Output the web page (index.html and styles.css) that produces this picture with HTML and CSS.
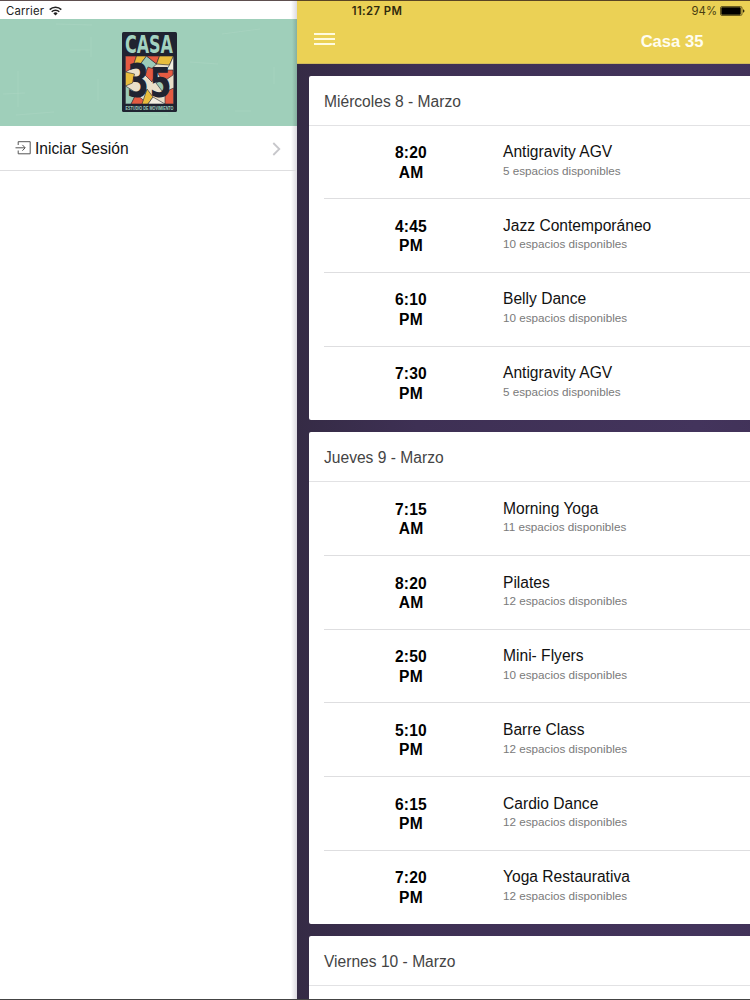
FILE: index.html
```
<!DOCTYPE html>
<html lang="es">
    <head>
        <meta charset="utf-8">
        <title>Casa 35</title>
        <meta name="viewport" content="width=device-width, initial-scale=1.0">
        <link rel="stylesheet" href="styles.css">
    </head>
    <body>
        <div class="statusbar">
            <div class="carrier">
                Carrier
                <svg width="13" height="10" viewBox="0 0 13 10" fill="none" stroke="#222" stroke-width="1.5">
                    <path d="M.7 3.6a8.2 8.2 0 0 1 11.6 0M2.7 5.8a5.4 5.4 0 0 1 7.6 0"/>
                    <path d="M6.5 9.6L4.4 7.4a3 3 0 0 1 4.2 0z" fill="#222" stroke="none"/>
                </svg>
            </div>
            <div class="clock">11:27 PM</div>
            <div class="battery">
                94%
                <svg width="25" height="10" viewBox="0 0 25 10">
                    <rect x=".5" y=".5" width="21.5" height="9" rx="1.5" fill="none" stroke="#6b5d22"/>
                    <rect x="1.3" y="1.3" width="19.4" height="7.4" rx=".8" fill="#000"/>
                    <path d="M23 3.2q1.5.5 1.5 1.8t-1.5 1.8z" fill="#30290c"/>
                </svg>
            </div>
        </div>
        <div class="app">
            <div class="menu">
                <div class="menu-header">
                    <svg class="scratches" width="297" height="107" viewBox="0 0 297 107" fill="none" stroke="#b5dccb" stroke-width="1">
                        <path d="M18 52v36M16 96l38-3M56 5l36 1M91 18v20M70 31h20M274 48v17M222 15l38-5M235 92h16M190 43l28 2M128 95l40 1M3 75l22-1M98 60v22" opacity=".3"/>
                    </svg>
                    <!-- logo -->
                    <svg class="logo" width="55" height="80" viewBox="0 0 55 80">
                        <rect width="55" height="80" rx="1.5" fill="#202331"/>
                        <text x="3" y="20.5" class="logo-casa" textLength="48" lengthAdjust="spacingAndGlyphs">CASA</text>
                        <rect x="3.5" y="24" width="48" height="48" fill="#e9dfc9"/>
                        <g stroke="#202331" stroke-width=".6">
                            <path d="M3.5 24h11l-4 12-7 4z" fill="#e55b42"/>
                            <path d="M14.5 24h10l-6 8-8 4z" fill="#e9bd3d"/>
                            <path d="M24.5 24l10 8-8 8-8-8z" fill="#9ccbb8"/>
                            <path d="M24.5 24h13l-3 8z" fill="#e55b42"/>
                            <path d="M37.5 24h14l-4 9-13-1z" fill="#e9bd3d"/>
                            <path d="M51.5 24v18l-7-4 3-5z" fill="#f2eee0"/>
                            <path d="M3.5 40l9 2-2 9-7 3z" fill="#e9bd3d"/>
                            <path d="M26 35l9 3-5 12-7-7z" fill="#e55b42"/>
                            <path d="M34 38h17v5l-10 7z" fill="#e55b42"/>
                            <path d="M3.5 54l11 7-5 11h-6z" fill="#9ccbb8"/>
                            <path d="M14 62l12 10H9z" fill="#e55b42"/>
                            <path d="M25 57l6 8-5 7h-6z" fill="#e9bd3d"/>
                            <path d="M31 65l12 7H26z" fill="#f2eee0"/>
                            <path d="M43 60l8.5-4v16H43z" fill="#e55b42"/>
                            <path d="M34 51l8-4 5 8-7 4z" fill="#9ccbb8"/>
                        </g>
                        <text x="5" y="64.5" class="logo-3" textLength="22" lengthAdjust="spacingAndGlyphs">3</text>
                        <text x="27.5" y="64.5" class="logo-5" textLength="22" lengthAdjust="spacingAndGlyphs">5</text>
                        <text x="3.5" y="77.8" class="logo-sub" textLength="48" lengthAdjust="spacingAndGlyphs">ESTUDIO DE MOVIMIENTO</text>
                    </svg>
                </div>
                <div class="menu-item">
                    <svg class="login" width="16" height="14" viewBox="0 0 16 14" fill="none" stroke="#555" stroke-width="1">
                        <path d="M3.2 4V.7h12v12.1h-12V9.5M.5 6.8h9.5M7.4 3.9l2.8 2.9-2.8 2.9"/>
                    </svg>
                    <span>Iniciar Sesión</span>
                    <svg class="chevron" width="9" height="14" viewBox="0 0 9 14" fill="none" stroke="#c7c7cb" stroke-width="1.8">
                        <path d="M1.3 1l6 6-6 6"/>
                    </svg>
                </div>
            </div>
            <div class="main">
                <div class="navbar">
                    <div class="burger"><i></i><i></i><i></i></div>
                    <div class="title">Casa 35</div>
                </div>
                <div class="content">
                    <div class="card">
                        <div class="day">Miércoles 8 - Marzo</div>
                        <div class="row">
                            <div class="time">8:20<br>AM</div>
                            <div class="info"><h2>Antigravity AGV</h2><p>5 espacios disponibles</p></div>
                        </div>
                        <div class="row">
                            <div class="time">4:45<br>PM</div>
                            <div class="info"><h2>Jazz Contemporáneo</h2><p>10 espacios disponibles</p></div>
                        </div>
                        <div class="row">
                            <div class="time">6:10<br>PM</div>
                            <div class="info"><h2>Belly Dance</h2><p>10 espacios disponibles</p></div>
                        </div>
                        <div class="row">
                            <div class="time">7:30<br>PM</div>
                            <div class="info"><h2>Antigravity AGV</h2><p>5 espacios disponibles</p></div>
                        </div>
                    </div>
                    <div class="card">
                        <div class="day">Jueves 9 - Marzo</div>
                        <div class="row">
                            <div class="time">7:15<br>AM</div>
                            <div class="info"><h2>Morning Yoga</h2><p>11 espacios disponibles</p></div>
                        </div>
                        <div class="row">
                            <div class="time">8:20<br>AM</div>
                            <div class="info"><h2>Pilates</h2><p>12 espacios disponibles</p></div>
                        </div>
                        <div class="row">
                            <div class="time">2:50<br>PM</div>
                            <div class="info"><h2>Mini- Flyers</h2><p>10 espacios disponibles</p></div>
                        </div>
                        <div class="row">
                            <div class="time">5:10<br>PM</div>
                            <div class="info"><h2>Barre Class</h2><p>12 espacios disponibles</p></div>
                        </div>
                        <div class="row">
                            <div class="time">6:15<br>PM</div>
                            <div class="info"><h2>Cardio Dance</h2><p>12 espacios disponibles</p></div>
                        </div>
                        <div class="row">
                            <div class="time">7:20<br>PM</div>
                            <div class="info"><h2>Yoga Restaurativa</h2><p>12 espacios disponibles</p></div>
                        </div>
                    </div>
                    <div class="card last">
                        <div class="day">Viernes 10 - Marzo</div>
                    </div>
                </div>
            </div>
        </div>
    </body>
</html>
```
FILE: styles.css
```
* {
    box-sizing: border-box;
}

body {
    margin: 0;
    font-family: "Liberation Sans", Arial, sans-serif;
    font-size: 15.6px;
    color: #111;
    background: #fff;
}

/* status bar, floats over both panels */
.statusbar {
    position: absolute;
    top: 0;
    left: 0;
    z-index: 2;
    display: grid;
    grid-template-columns: 1fr auto 1fr;
    align-items: center;
    width: 100%;
    height: 20px;
    padding: 0 5px 0 6px;
    border-top: 1px solid rgba(40, 20, 20, 0.75);
    font-family: Inter, "Liberation Sans", sans-serif;
    font-size: 11.3px;
    color: #222;
}

.carrier,
.battery {
    display: flex;
    align-items: center;
    gap: 5px;
}

.carrier {
    letter-spacing: 0.15px;
}

.clock {
    padding-left: 3px;
    font-weight: 600;
    letter-spacing: 0.4px;
    color: #30290c;
}

.battery {
    justify-content: flex-end;
    gap: 3px;
    color: #4a3d10;
}

.app {
    display: flex;
    height: 1000px;
    overflow: hidden;
    border-bottom: 1px solid #444;
}

/* side menu */
.menu {
    flex: none;
    width: 297px;
    padding-top: 19px;
    background: linear-gradient(to right, transparent 291px, #dcdae0) #fff;
}

.menu-header {
    display: grid;
    justify-items: center;
    height: 107px;
    background: linear-gradient(to right, transparent 292px, rgba(60, 80, 80, 0.25)) #9fcfba;
}

.scratches,
.logo {
    grid-area: 1 / 1;
}

.logo {
    margin: 13px 0 0 1px;
}

.logo-casa {
    font: bold 24px "DejaVu Sans Condensed", "DejaVu Sans", sans-serif;
    fill: #a3d2c0;
}

.logo-3,
.logo-5 {
    font: bold 46px "DejaVu Sans Condensed", "DejaVu Sans", sans-serif;
    fill: #202331;
}

.logo-5 {
    font-size: 41px;
}

.logo-sub {
    font: bold 5px "Liberation Sans", sans-serif;
    fill: #a3d2c0;
}

.menu-item {
    display: flex;
    align-items: center;
    gap: 4px;
    height: 45px;
    padding: 2px 16px 0 15px;
    border-bottom: 1px solid #dedee0;
}

.menu-item .login {
    margin-bottom: 3px;
}

.menu-item .chevron {
    margin-left: auto;
}

/* main panel, slid to the right by the open menu */
.main {
    flex: none;
    width: 750px;
    background: linear-gradient(to right, #352b45, #3e3054 120px, #43345c 400px, #392b4a);
}

.navbar {
    display: grid;
    grid-template-columns: 1fr auto 1fr;
    align-items: center;
    height: 64px;
    padding: 21px 17px 0;
    background: #ebd155;
    border-bottom: 1px solid #d1bb5b;
}

.burger {
    width: 21px;
    padding-bottom: 7px;
}

.burger i {
    display: block;
    height: 2px;
    margin-bottom: 3px;
    background: #fffbe0;
}

.burger i:last-child {
    margin-bottom: 0;
}

.title {
    font-size: 16.6px;
    font-weight: bold;
    color: #fffdf0;
}

.content {
    padding: 11.5px 12px;
}

.card {
    margin-bottom: 12px;
    background: #fff;
    border-radius: 2px;
}

.day {
    height: 50px;
    padding-left: 15px;
    line-height: 52.6px;
    color: #444;
    border-bottom: 1px solid #e2e2e4;
}

.row {
    display: flex;
    height: 73.7px;
    margin-left: 15px;
    padding-top: 17.6px;
    border-bottom: 1px solid #dedee0;
}

.row:last-child {
    border-bottom: none;
}

.time {
    width: 174px;
    font-weight: bold;
    line-height: 19.5px;
    letter-spacing: 0.2px;
    text-align: center;
    color: #000;
}

.info {
    padding-left: 5px;
}

.info h2 {
    margin: 0;
    font-size: 15.6px;
    font-weight: normal;
    line-height: 18px;
}

.info p {
    margin: 0.6px 0 0;
    font-size: 11.7px;
    line-height: 17px;
    color: #7a7a7a;
}

.last {
    height: 80px;
    margin-bottom: 0;
}
```
